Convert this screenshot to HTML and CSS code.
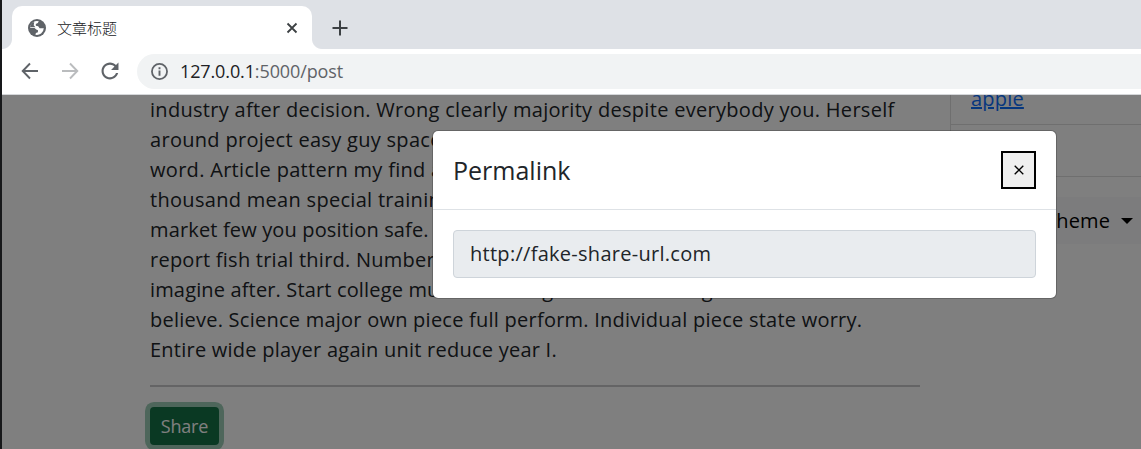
FILE: index.html
```
<!DOCTYPE html>
<html lang="en">
<head>
<meta charset="utf-8">
<title>文章标题</title>
<link rel="stylesheet" href="styles.css">
</head>
<body>
<div class="window">
  <div class="tabstrip">
    <div class="tab">
      <svg class="globe" viewBox="0 0 18 18"><circle cx="9" cy="9" r="9" fill="#5f6368"/><path d="M10.8 2.2 9.8 4 7.8 4.9 7.9 6.8 10.2 7.2 11.6 9.2 15.8 9.3A7 7 0 0 1 7.4 15.8L7.9 13.9 9.9 13.2 10 11.3 8.2 10.6 6.6 8.9 2.1 8.8A7 7 0 0 1 10.8 2.2z" fill="#fff"/><path d="M2.6 6.2 4.3 3.7 6.2 3 5.7 6.3 7.4 8.2 2.1 8z" fill="#5f6368"/></svg>
      <span class="tab-title">文章标题</span>
      <svg class="tab-close" viewBox="0 0 12 12"><path d="M1.5 1.5l9 9m0-9l-9 9" stroke="#3c4043" stroke-width="1.8"/></svg>
    </div>
    <svg class="new-tab" viewBox="0 0 16 16"><path d="M8 .5v15M.5 8h15" stroke="#3c4043" stroke-width="2"/></svg>
  </div>
  <div class="toolbar">
    <svg class="nav" viewBox="0 0 18 18"><path d="M17 9H2M9 1.5 1.7 9 9 16.5" fill="none" stroke="#5f6368" stroke-width="1.9"/></svg>
    <svg class="nav" viewBox="0 0 18 18"><path d="M1 9h15M9 1.5 16.3 9 9 16.5" fill="none" stroke="#babcbe" stroke-width="1.9"/></svg>
    <svg class="nav" viewBox="3.5 3.5 17 17"><path d="M17.65 6.35C16.2 4.9 14.21 4 12 4c-4.42 0-7.99 3.58-7.99 8s3.57 8 7.99 8c3.73 0 6.84-2.55 7.73-6h-2.08c-.82 2.33-3.04 4-5.65 4-3.31 0-6-2.69-6-6s2.69-6 6-6c1.66 0 3.14.69 4.22 1.78L13 11h7V4l-2.35 2.35z" fill="#5f6368"/></svg>
    <div class="address">
      <svg class="info" viewBox="0 0 16 16"><circle cx="8" cy="8" r="7.1" fill="none" stroke="#5f6368" stroke-width="1.7"/><path d="M8 7v5M8 4v1.8" stroke="#5f6368" stroke-width="1.8"/></svg>
      <span class="url"><b>127.0.0.1</b>:5000/post</span>
    </div>
  </div>
  <div class="page">
    <main class="article">
      <div class="body-text">
        <span>industry after decision. Wrong clearly majority despite everybody you. Herself</span>
        <span>around project easy guy space</span>
        <span>word. Article pattern my find a</span>
        <span>thousand mean special training</span>
        <span class="snug">market few you position safe.</span>
        <span class="tight">report fish trial third. Number</span>
        <span class="snug">imagine after. Start college museum brought children along</span>
        <span class="tight">believe. Science major own piece full perform. Individual piece state worry.</span>
        <span class="tight">Entire wide player again unit reduce year I.</span>
      </div>
      <hr class="rule">
      <button class="share">Share</button>
    </main>
    <aside class="side">
      <div class="card">
        <div class="card-body"><a href="#">apple</a></div>
        <div class="card-foot"></div>
      </div>
      <div class="theme"><span>Theme</span><i class="caret"></i></div>
    </aside>
    <div class="backdrop"></div>
    <div class="modal">
      <div class="modal-head">
        <h5>Permalink</h5>
        <button class="close"><svg viewBox="0 0 10 10"><path d="M.7.7l8.6 8.6m0-8.6L.7 9.3" stroke="#000" stroke-width="1.3"/></svg></button>
      </div>
      <div class="modal-body"><div class="field">http://fake-share-url.com</div></div>
    </div>
  </div>
</div>
</body>
</html>
```
FILE: styles.css
```
* { box-sizing: border-box; }
body { margin: 0; font-family: "Open Sans", "Noto Sans", sans-serif; font-size: 20px; line-height: 30px; color: #212529; background: #17181a; overflow: hidden; }
.window { width: 1139px; height: 449px; margin-left: 2px; display: flex; flex-direction: column; background: #fff; }
.tabstrip { height: 49px; flex: none; background: #dee1e6; display: flex; padding: 6px 0 0 10px; }
.tab { position: relative; width: 300px; height: 43px; background: #fff; border-radius: 10px 10px 0 0; display: flex; align-items: center; padding: 0 14px 0 16px; }
.tab::before, .tab::after { content: ""; position: absolute; bottom: 0; width: 10px; height: 10px; }
.tab::before { left: -10px; background: radial-gradient(circle at 0 0, #dee1e6 9.5px, #fff 10.5px); }
.tab::after { right: -10px; background: radial-gradient(circle at 100% 0, #dee1e6 9.5px, #fff 10.5px); }
.globe { width: 18px; height: 18px; }
.tab-title { margin-left: 11px; font: 300 15px/20px "Noto Sans CJK SC", sans-serif; color: #202124; flex: 1; }
.tab-close { width: 12px; height: 12px; }
.new-tab { width: 16px; height: 16px; margin: 14px 0 0 20px; }
.toolbar { height: 46px; flex: none; display: flex; align-items: center; padding: 0 0 1px 19px; gap: 22px; border-bottom: 1px solid #d5d7da; }
.nav { width: 18px; height: 18px; flex: none; }
.address { flex: 1; height: 35px; margin-left: -4px; margin-right: -20px; background: #f1f3f4; border-radius: 18px; display: flex; align-items: center; padding-left: 14px; }
.info { width: 17px; height: 17px; }
.url { margin-left: 12px; font-size: 18px; line-height: 30px; color: #5f6368; letter-spacing: -.12px; }
.url b { font-weight: 400; color: #202124; }
.page { position: relative; flex: 1; min-height: 0; overflow: hidden; display: flex; padding-left: 148px; }
.article { width: 770px; flex: none; }
.body-text { display: flex; flex-direction: column; align-items: flex-start; white-space: nowrap; letter-spacing: .3px; }
.body-text .tight { letter-spacing: .24px; }
.body-text .snug { letter-spacing: .15px; }
.rule { height: 2px; border: 0; margin: 20px 0; background: #c8c9ca; }
.share { display: block; border: 0; margin: 0; width: 69px; height: 38px; padding: 0; border-radius: 4px; background: #157347; color: #fff; font: 18px/38px "Open Sans", sans-serif; box-shadow: 0 0 0 5px rgba(60,153,110,.5); letter-spacing: -.2px; }
.side { flex: 1; margin-left: 30px; }
.card { border: solid #dfdfdf; border-width: 0 0 1px 1px; height: 82px; display: flow-root; }
.card-body { height: 30px; border-bottom: 1px solid #dfdfdf; padding-left: 20px; display: flow-root; }
.card-body a { color: #0d6efd; display: block; margin-top: -11px; letter-spacing: .2px; }
.theme { margin-top: 20px; height: 47px; background: #f8f9fa; display: flex; align-items: center; padding-left: 95px; color: #000; letter-spacing: .2px; }
.caret { margin-left: 11px; border: 6px solid transparent; border-top-color: #000; border-bottom: 0; }
.backdrop { position: absolute; inset: 0; background: rgba(0,0,0,.5); }
.modal { position: absolute; left: 430px; top: 35px; width: 625px; height: 169px; background: #fff; background-clip: padding-box; border: 1px solid rgba(0,0,0,.2); border-radius: 6px; }
.modal-head { height: 79px; border-bottom: 1px solid #dee2e6; display: flex; align-items: center; justify-content: space-between; padding: 0 20px; }
h5 { margin: 0; font-size: 25px; font-weight: 400; line-height: 38px; }
.close { width: 35px; height: 38px; padding: 0; border: 2px solid #000; background: #efefef; display: grid; place-items: center; }
.close svg { width: 10px; height: 10px; }
.modal-body { padding: 20px; }
.field { height: 48px; border: 1px solid #ced4da; border-radius: 4px; background: #e9ecef; padding: 8px 16px; letter-spacing: .28px; }
```
